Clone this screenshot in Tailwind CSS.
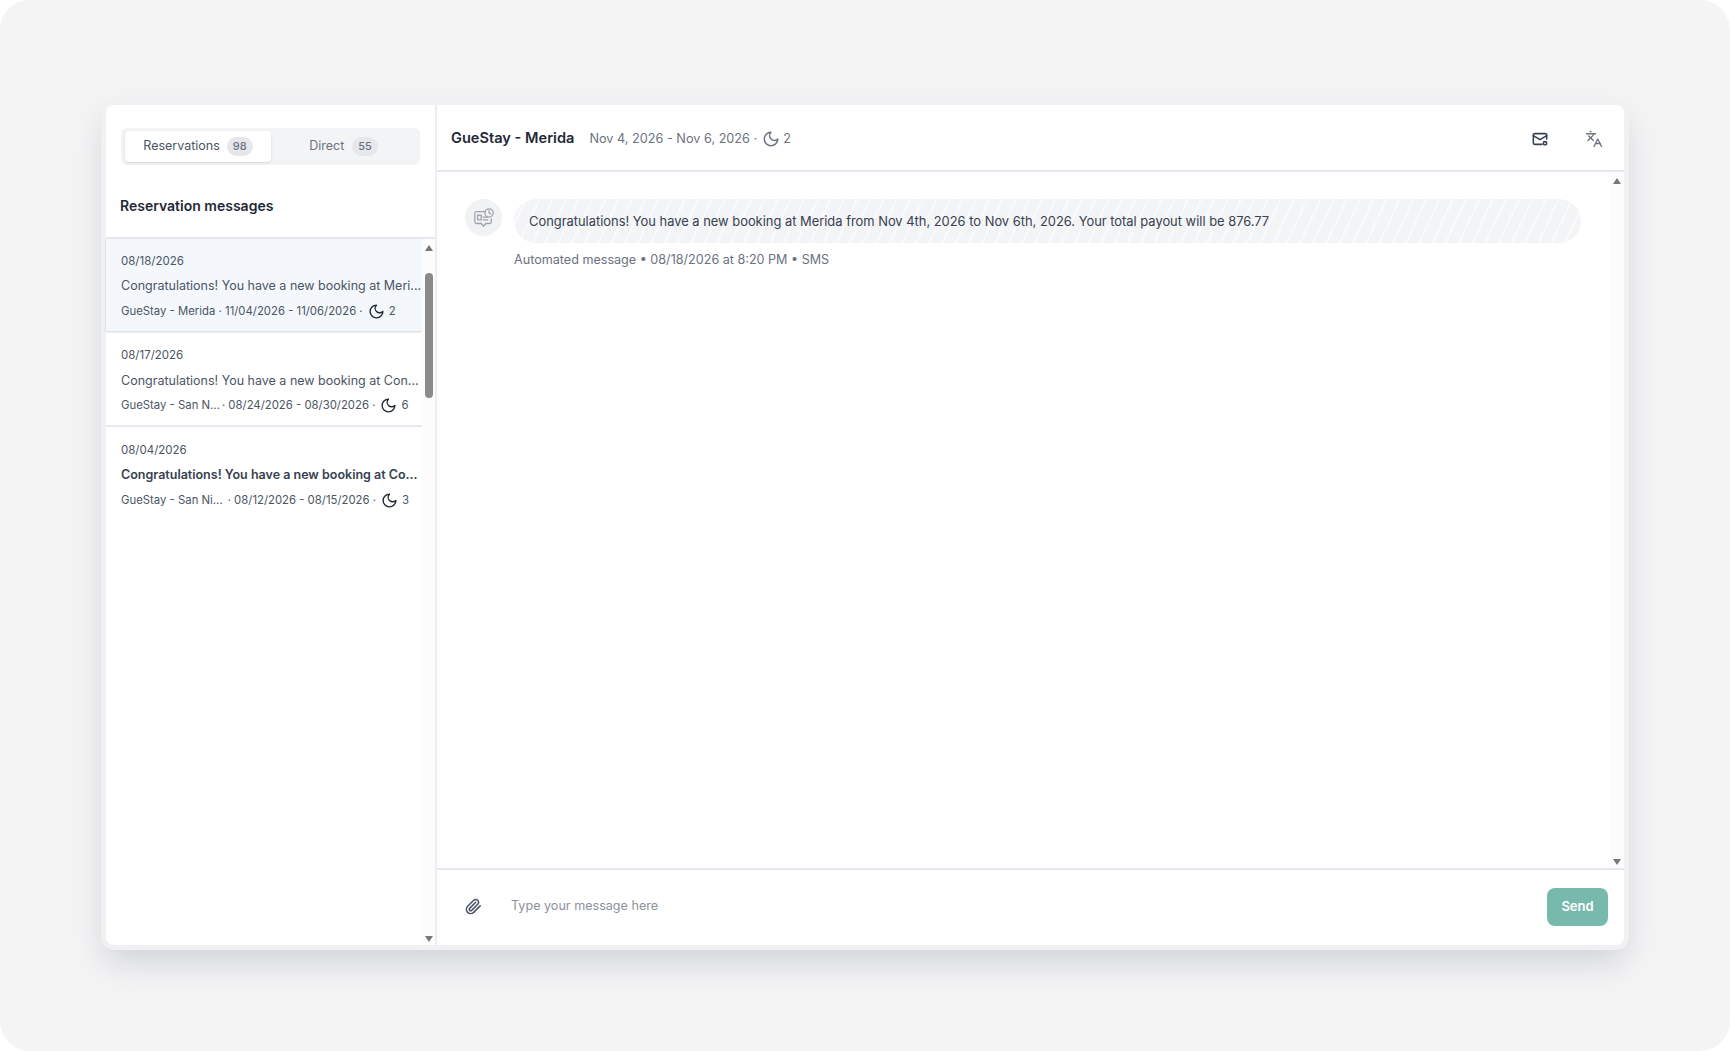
<!DOCTYPE html>
<html lang="en">

<head>
  <meta charset="UTF-8" />
  <title>Reservation messages</title>
  <script src="https://cdn.jsdelivr.net/npm/@tailwindcss/browser@4"></script>
</head>

<body class="bg-white font-['Inter',sans-serif] text-[#4b5563]">
  <div class="h-[1051px] w-[1730px] overflow-hidden rounded-[30px] bg-[#f4f4f5] pl-[106px] pt-[105px]">
    <!-- Card -->
    <div class="flex h-[840px] w-[1518px] rounded-lg bg-white shadow-[0_0_0_5px_#f1f1f3,0_16px_32px_rgba(110,118,135,0.28)]">
      <!-- Sidebar -->
      <aside class="flex w-[331px] shrink-0 flex-col border-r-2 border-[#eeeef2]">
        <div class="h-[134px] shrink-0 border-b-2 border-[#e6e7ec] px-[15px] pt-[23px]">
          <div class="flex h-[37px] w-[299px] items-center rounded-md bg-[#f3f4f6] px-[4px]">
            <div class="flex h-[31px] w-[146px] items-center justify-center gap-[7px] rounded bg-white text-[12.5px] text-[#4b5563] shadow-sm">
              Reservations
              <span class="rounded-full bg-[#e5e7eb] px-[6px] py-[1px] text-[11px] font-medium text-[#6b7280]">98</span>
            </div>
            <div class="flex h-[31px] flex-1 items-center justify-center gap-[8px] text-[12.5px] text-[#6b7280]">
              Direct
              <span class="rounded-full bg-[#e5e7eb] px-[6px] py-[1px] text-[11px] font-medium text-[#6b7280]">55</span>
            </div>
          </div>
          <h2 class="-ml-px mt-[30px] text-[14px] font-semibold text-[#1f2937]">Reservation messages</h2>
        </div>

        <div class="flex min-h-0 flex-1">
          <!-- List -->
          <ul class="w-[316px] shrink-0">
            <li class="h-[92px] bg-[#f4f8fd] pl-[15px] pt-[13px] shadow-[0_1px_2px_rgba(100,110,130,0.3)]">
              <div class="text-[11.5px] leading-[18px] text-[#4b5563]">08/18/2026</div>
              <div class="mt-[7px] whitespace-nowrap text-[12.5px] leading-[18px] text-[#4b5563]">Congratulations! You have a new booking at Meri...</div>
              <div class="mt-[7px] flex items-center text-[11.35px] leading-[18px] text-[#4b5563]">
                <span class="whitespace-nowrap">GueStay - Merida · 11/04/2026 - 11/06/2026 ·</span>
                <svg class="ml-[5px] mr-[4px] h-[17px] w-[17px] shrink-0 text-[#1f2937]" viewBox="0 0 24 24" fill="none" stroke="currentColor" stroke-width="2" stroke-linecap="round" stroke-linejoin="round"><path d="M12 3a6 6 0 0 0 9 9 9 9 0 1 1-9-9Z" /></svg>
                <span>2</span>
              </div>
            </li>
            <li class="h-[96px] border-b-2 border-[#e8e9ee] pl-[15px] pt-[15px]">
              <div class="text-[11.5px] leading-[18px] text-[#4b5563]">08/17/2026</div>
              <div class="mt-[8px] whitespace-nowrap text-[12.5px] leading-[18px] text-[#4b5563]">Congratulations! You have a new booking at Con...</div>
              <div class="mt-[6px] flex items-center text-[11.35px] leading-[18px] text-[#4b5563]">
                <span class="whitespace-nowrap">GueStay - San N...</span>
                <span class="ml-[2px] whitespace-nowrap">· 08/24/2026 - 08/30/2026 ·</span>
                <svg class="ml-[5px] mr-[4px] h-[17px] w-[17px] shrink-0 text-[#1f2937]" viewBox="0 0 24 24" fill="none" stroke="currentColor" stroke-width="2" stroke-linecap="round" stroke-linejoin="round"><path d="M12 3a6 6 0 0 0 9 9 9 9 0 1 1-9-9Z" /></svg>
                <span>6</span>
              </div>
            </li>
            <li class="h-[94px] pl-[15px] pt-[14px]">
              <div class="text-[11.5px] leading-[18px] text-[#4b5563]">08/04/2026</div>
              <div class="mt-[7px] whitespace-nowrap text-[12.5px] font-semibold leading-[18px] text-[#374151]">Congratulations! You have a new booking at Co...</div>
              <div class="mt-[7px] flex items-center text-[11.35px] leading-[18px] text-[#4b5563]">
                <span class="whitespace-nowrap">GueStay - San Ni...</span>
                <span class="ml-[5px] whitespace-nowrap">· 08/12/2026 - 08/15/2026 ·</span>
                <svg class="ml-[5px] mr-[4px] h-[17px] w-[17px] shrink-0 text-[#1f2937]" viewBox="0 0 24 24" fill="none" stroke="currentColor" stroke-width="2" stroke-linecap="round" stroke-linejoin="round"><path d="M12 3a6 6 0 0 0 9 9 9 9 0 1 1-9-9Z" /></svg>
                <span>3</span>
              </div>
            </li>
          </ul>
          <!-- Sidebar scrollbar -->
          <div class="flex flex-1 flex-col items-center bg-[#fcfcfc] pb-[3px] pt-[6px]">
            <div class="h-0 w-0 border-x-[4px] border-b-[6px] border-x-transparent border-b-[#777]"></div>
            <div class="mt-[22px] h-[125px] w-[8px] rounded-full bg-[#8a8a8a]"></div>
            <div class="mt-auto h-0 w-0 border-x-[4px] border-t-[6px] border-x-transparent border-t-[#777]"></div>
          </div>
        </div>
      </aside>

      <!-- Conversation -->
      <main class="flex min-w-0 flex-1 flex-col">
        <header class="flex h-[67px] shrink-0 items-center border-b-2 border-[#e6e7ec] pl-[14px] pt-[2px]">
          <h1 class="text-[14.6px] font-semibold text-[#1f2937]">GueStay - Merida</h1>
          <span class="ml-[15px] text-[12.7px] text-[#6b7280]">Nov 4, 2026 - Nov 6, 2026 ·</span>
          <svg class="ml-[5px] h-[18px] w-[18px] text-[#6b7280]" viewBox="0 0 24 24" fill="none" stroke="currentColor" stroke-width="2" stroke-linecap="round" stroke-linejoin="round"><path d="M12 3a6 6 0 0 0 9 9 9 9 0 1 1-9-9Z" /></svg>
          <span class="ml-[3px] text-[12.7px] text-[#6b7280]">2</span>
          <svg class="ml-auto h-[16px] w-[16px] text-[#374151]" viewBox="0 0 24 24" fill="none" stroke="currentColor" stroke-width="2.4" stroke-linecap="round" stroke-linejoin="round">
            <path d="M22 12V6a2 2 0 0 0-2-2H4a2 2 0 0 0-2 2v12a2 2 0 0 0 2 2h11" />
            <path d="m2 7 10 6 10-6" />
            <circle cx="19.5" cy="18.5" r="2.5" />
          </svg>
          <svg class="ml-[37px] mr-[21px] h-[18px] w-[18px] text-[#6b7280]" viewBox="0 0 24 24" fill="none" stroke="currentColor" stroke-width="1.8" stroke-linecap="round" stroke-linejoin="round">
            <path d="m5 8 6 6" />
            <path d="m4 14 6-6 2-3" />
            <path d="M2 5h12" />
            <path d="M7 2h1" />
            <path d="m22 22-5-10-5 10" />
            <path d="M14 18h6" />
          </svg>
        </header>

        <div class="flex min-h-0 flex-1">
          <div class="flex-1 pl-[28px] pt-[27px]">
            <div class="flex gap-[12px]">
              <div class="flex h-[37px] w-[37px] shrink-0 items-center justify-center rounded-full bg-[#f1f2f4]">
                <svg class="h-[22px] w-[22px] text-[#9ca3af]" viewBox="0 0 24 24" fill="none" stroke="currentColor" stroke-width="1.4" stroke-linecap="round" stroke-linejoin="round">
                  <path d="M13 5H4a2 2 0 0 0-2 2v9a2 2 0 0 0 2 2h5l2.500 3 2.500-3h4a2 2 0 0 0 2-2v-3" />
                  <path d="M5 9h4v5H5z" />
                  <path d="M11 11h5M11 14h5" />
                  <circle cx="17.500" cy="6.500" r="4.500" />
                  <path d="M17.500 4v2.500l1.800 1" />
                </svg>
              </div>
              <div>
                <div class="flex h-[44px] w-[1067px] items-center rounded-[22px] bg-[repeating-linear-gradient(115deg,#f3f4f6_0px,#f3f4f6_10px,#fafafc_10px,#fafafc_12px)] pl-[15px] pt-[1px] text-[12.9px] text-[#374151]">Congratulations! You have a new booking at Merida from Nov 4th, 2026 to Nov 6th, 2026. Your total payout will be 876.77</div>
                <div class="mt-[7px] text-[12.6px] leading-[20px] text-[#6b7280]">Automated message • 08/18/2026 at 8:20 PM • SMS</div>
              </div>
            </div>
          </div>
          <!-- Chat scrollbar -->
          <div class="flex w-[14px] shrink-0 flex-col items-center justify-between bg-[#fcfcfc] pb-[3px] pt-[6px]">
            <div class="h-0 w-0 border-x-[4px] border-b-[6px] border-x-transparent border-b-[#777]"></div>
            <div class="h-0 w-0 border-x-[4px] border-t-[6px] border-x-transparent border-t-[#777]"></div>
          </div>
        </div>

        <footer class="flex h-[77px] shrink-0 items-center border-t-2 border-[#e6e7ec] pb-[2px] pl-[28px] pr-[16px]">
          <svg class="h-[17px] w-[17px] text-[#4b5563]" viewBox="0 0 24 24" fill="none" stroke="currentColor" stroke-width="2.200" stroke-linecap="round" stroke-linejoin="round"><path d="m21.440 11.050-9.190 9.190a6 6 0 0 1-8.490-8.490l8.570-8.570A4 4 0 1 1 18 8.840l-8.590 8.570a2 2 0 0 1-2.830-2.830l8.490-8.480" /></svg>
          <span class="ml-[29px] text-[12.6px] text-[#8b929c]">Type your message here</span>
          <button class="ml-auto h-[38px] w-[61px] rounded-lg bg-[#78b9ad] text-[13px] font-semibold text-white">Send</button>
        </footer>
      </main>
    </div>
  </div>
</body>

</html>
